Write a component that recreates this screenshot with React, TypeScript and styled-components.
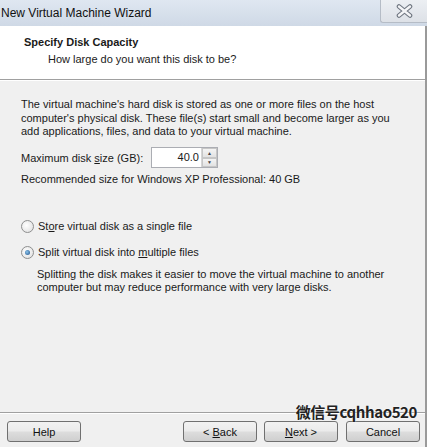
import React from 'react';
import styled, { createGlobalStyle } from 'styled-components';

const GlobalStyle = createGlobalStyle`
  html, body {
    margin: 0;
    padding: 0;
    background: #f0f0f0;
  }
  body {
    font-family: "Liberation Sans", Arial, sans-serif;
    font-size: 11px;
    color: #1a1a1a;
  }
`;

const Window = styled.div`
  position: relative;
  width: 427px;
  height: 447px;
  display: flex;
  flex-direction: column;
  background: #f0f0f0;
  overflow: hidden;
`;

const TitleBar = styled.div`
  height: 26px;
  display: flex;
  align-items: flex-start;
  justify-content: space-between;
  background: linear-gradient(#dfe7f1, #cfd9e6);
`;

const TitleText = styled.span`
  font-size: 12px;
  line-height: 26px;
  padding-left: 1px;
  color: #111;
`;

const CloseButton = styled.div`
  width: 46px;
  height: 22px;
  display: flex;
  align-items: center;
  justify-content: center;
  background: linear-gradient(#eceff3, #dde1e7);
  border-left: 1px solid #b5bcc6;
  border-bottom: 1px solid #b5bcc6;
  border-radius: 0 0 0 3px;
`;

const Content = styled.div`
  flex: 1;
  display: flex;
  flex-direction: column;
  border-right: 2px solid #9a9a9a;
`;

const Header = styled.div`
  height: 54px;
  background: #ffffff;
  border-bottom: 1px solid #a0a0a0;
  box-shadow: 0 1px 0 #ffffff;
  padding: 9px 0 0 24px;
  box-sizing: border-box;
`;

const HeaderTitle = styled.div`
  font-weight: bold;
  font-size: 11px;
  line-height: 14px;
`;

const HeaderSub = styled.div`
  padding-left: 24px;
  padding-top: 2px;
  line-height: 16px;
`;

const Body = styled.div`
  flex: 1;
  padding: 18px 20px 0 21px;
  display: flex;
  flex-direction: column;
`;

const Paragraph = styled.p<{ $indent?: number; $top?: number }>`
  margin: ${({ $top }) => $top ?? 0}px 0 0 0;
  line-height: 13.5px;
  padding-left: ${({ $indent }) => $indent ?? 0}px;
`;

const SizeRow = styled.div`
  display: flex;
  align-items: center;
  margin-top: 9px;
  height: 20px;
`;

const SizeLabel = styled.span`
  width: 130px;
`;

const SpinBox = styled.div`
  display: flex;
  height: 19px;
  border: 1px solid #abadb3;
  background: #fff;
`;

const SpinInput = styled.div`
  width: 47px;
  text-align: right;
  padding-right: 2px;
  line-height: 19px;
  font-size: 11px;
`;

const SpinArrows = styled.div`
  width: 15px;
  display: flex;
  flex-direction: column;
  border-left: 1px solid #d6d6d6;
`;

const SpinArrow = styled.div`
  flex: 1;
  display: flex;
  align-items: center;
  justify-content: center;
  background: linear-gradient(#f4f4f4, #e2e2e2);
  border: 1px solid #c6c6c6;
  font-size: 5px;
  color: #444;
`;

const Recommended = styled.div`
  margin-top: 4px;
  line-height: 14px;
`;

const RadioGroup = styled.div`
  margin-top: 34px;
  display: flex;
  flex-direction: column;
  gap: 13px;
`;

const RadioRow = styled.label`
  display: flex;
  align-items: center;
  gap: 4px;
  line-height: 13px;
`;

const RadioDot = styled.span<{ $checked?: boolean }>`
  width: 11px;
  height: 11px;
  border-radius: 50%;
  border: 1px solid #8e8f8f;
  background: radial-gradient(circle at 40% 40%, #ffffff, #dcdcdc);
  display: flex;
  align-items: center;
  justify-content: center;
  &::after {
    content: '';
    width: 5px;
    height: 5px;
    border-radius: 50%;
    display: ${({ $checked }) => ($checked ? 'block' : 'none')};
    background: radial-gradient(circle at 40% 40%, #8cc4ec, #1b4d86);
  }
`;

const Footer = styled.div`
  height: 35px;
  border-top: 1px solid #a0a0a0;
  box-shadow: inset 0 1px 0 #ffffff;
  display: flex;
  align-items: flex-start;
  padding: 8px 0 0 7px;
  box-sizing: border-box;
`;

const Button = styled.div<{ $ml?: number }>`
  width: 72px;
  height: 19px;
  margin-left: ${({ $ml }) => $ml ?? 0}px;
  border: 1px solid #707070;
  border-radius: 3px;
  background: linear-gradient(#f2f2f2 0%, #ebebeb 48%, #dddddd 52%, #cfcfcf 100%);
  display: flex;
  align-items: center;
  justify-content: center;
  font-size: 11px;
  color: #111;
`;

const Watermark = styled.div`
  position: absolute;
  right: 10px;
  bottom: 25px;
  font-family: "Noto Sans CJK SC", "Liberation Sans", sans-serif;
  font-size: 15px;
  font-weight: bold;
  color: #222;
  letter-spacing: -0.4px;
  text-shadow: 0 0 2px #fff;
`;

export default function App() {
  return (
    <>
      <GlobalStyle />
      <Window>
        <TitleBar>
          <TitleText>New Virtual Machine Wizard</TitleText>
          <CloseButton>
            <svg width="19" height="14" viewBox="0 0 19 14">
              <path
                d="M4 2.5 L15 11.5 M15 2.5 L4 11.5"
                stroke="#6f7680"
                strokeWidth="4.6"
                strokeLinecap="round"
              />
              <path
                d="M4 2.5 L15 11.5 M15 2.5 L4 11.5"
                stroke="#f4f5f7"
                strokeWidth="2.4"
                strokeLinecap="round"
                fill="none"
              />
            </svg>
          </CloseButton>
        </TitleBar>
        <Content>
          <Header>
            <HeaderTitle>Specify Disk Capacity</HeaderTitle>
            <HeaderSub>How large do you want this disk to be?</HeaderSub>
          </Header>
          <Body>
            <Paragraph>
              The virtual machine's hard disk is stored as one or more files on the host
              <br />
              computer's physical disk. These file(s) start small and become larger as you
              <br />
              add applications, files, and data to your virtual machine.
            </Paragraph>
            <SizeRow>
              <SizeLabel>
                Maximum disk <u>s</u>ize (GB):
              </SizeLabel>
              <SpinBox>
                <SpinInput>40.0</SpinInput>
                <SpinArrows>
                  <SpinArrow>▲</SpinArrow>
                  <SpinArrow>▼</SpinArrow>
                </SpinArrows>
              </SpinBox>
            </SizeRow>
            <Recommended>Recommended size for Windows XP Professional: 40 GB</Recommended>
            <RadioGroup>
              <RadioRow>
                <RadioDot />
                <span>
                  St<u>o</u>re virtual disk as a single file
                </span>
              </RadioRow>
              <RadioRow>
                <RadioDot $checked />
                <span>
                  Split virtual disk into <u>m</u>ultiple files
                </span>
              </RadioRow>
            </RadioGroup>
            <Paragraph $indent={16} $top={9}>
              Splitting the disk makes it easier to move the virtual machine to another
              <br />
              computer but may reduce performance with very large disks.
            </Paragraph>
          </Body>
          <Footer>
            <Button>Help</Button>
            <Button $ml={102}>
              <span>
                &lt; <u>B</u>ack
              </span>
            </Button>
            <Button $ml={7}>
              <span>
                <u>N</u>ext &gt;
              </span>
            </Button>
            <Button $ml={8}>Cancel</Button>
          </Footer>
        </Content>
        <Watermark>微信号cqhhao520</Watermark>
      </Window>
    </>
  );
}
